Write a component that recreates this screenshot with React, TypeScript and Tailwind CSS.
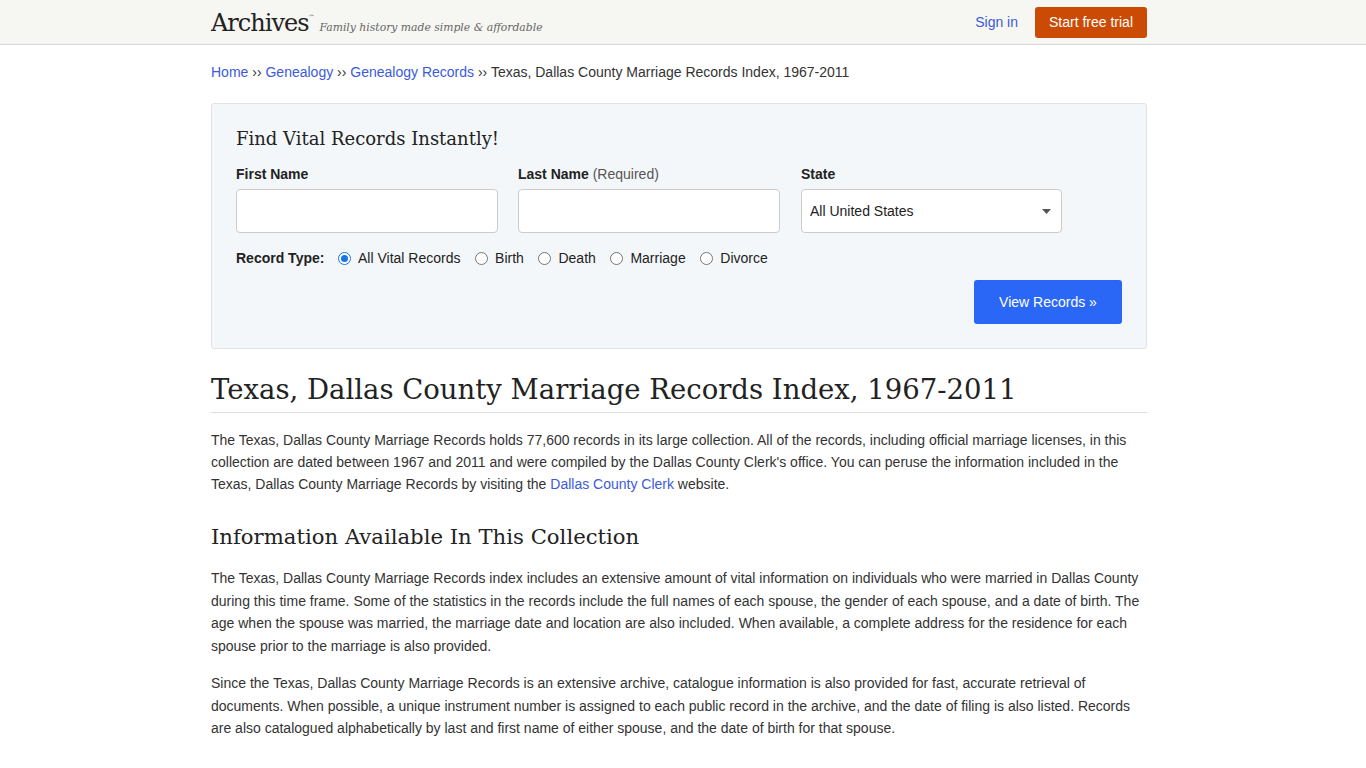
const serif = "font-['DejaVu_Serif',Georgia,serif]";

function Radio({ label, checked }: { label: string; checked?: boolean }) {
  return (
    <label className="flex items-center gap-[7px]">
      <span
        className={
          checked
            ? "w-[13px] h-[13px] rounded-full border border-[#1a73e8] bg-white flex items-center justify-center"
            : "w-[13px] h-[13px] rounded-full border border-[#767676] bg-white"
        }
      >
        {checked && <span className="w-[7px] h-[7px] rounded-full bg-[#1a73e8]" />}
      </span>
      <span>{label}</span>
    </label>
  );
}

export default function App() {
  return (
    <div className="min-h-screen bg-white text-[#333] font-['Liberation_Sans',Arial,sans-serif] text-[14px]">
      {/* HEADER */}
      <header className="bg-[#f6f6f2] border-b border-[#d8d8d8] h-[45px]">
        <div className="w-[944px] mx-auto pr-[8px] h-full flex items-center justify-between">
          <div className="flex items-baseline gap-[6px] pt-[2px]">
            <span className={`${serif} text-[24px] text-[#222] tracking-[-1px]`}>
              Archives<sup className="text-[6px] align-super">™</sup>
            </span>
            <span className={`${serif} italic text-[10.8px] text-[#666]`}>
              Family history made simple &amp; affordable
            </span>
          </div>
          <div className="flex items-center gap-[17px]">
            <a className="text-[#3b5bdb] text-[14px]">Sign in</a>
            <button className="bg-[#cc4b04] text-white text-[14px] rounded-[3px] w-[112px] h-[31px]">
              Start free trial
            </button>
          </div>
        </div>
      </header>

      <main className="w-[944px] mx-auto pr-[8px]">
        {/* BREADCRUMB */}
        <nav className="pt-[17px] text-[14px] leading-[20px]">
          <a className="text-[#3b5bdb]">Home</a> ›› <a className="text-[#3b5bdb]">Genealogy</a> ››{" "}
          <a className="text-[#3b5bdb]">Genealogy Records</a> ›› Texas, Dallas County Marriage Records Index,
          1967-2011
        </nav>

        {/* SEARCH */}
        <div className="mt-[21px] bg-[#f4f7fa] border border-[#dde3e9] rounded-[3px] px-[24px] pt-[22px] pb-[24px]">
          <h3 className={`${serif} text-[18px] text-[#222] leading-[26px]`}>Find Vital Records Instantly!</h3>
          <div className="grid grid-cols-[262px_262px_262px] gap-x-[20px] mt-[12px]">
            <div>
              <div className="font-bold text-[#222] leading-[20px]">First Name</div>
              <input className="mt-[5px] w-full h-[44px] bg-white border border-[#ccc] rounded-[4px]" />
            </div>
            <div>
              <div className="leading-[20px] text-[#222]">
                <b>Last Name</b> <span className="text-[#555]">(Required)</span>
              </div>
              <input className="mt-[5px] w-full h-[44px] bg-white border border-[#ccc] rounded-[4px]" />
            </div>
            <div className="pl-[1px]">
              <div className="font-bold text-[#222] leading-[20px]">State</div>
              <div className="mt-[5px] w-full h-[44px] bg-white border border-[#ccc] rounded-[4px] flex items-center justify-between pl-[8px] pr-[10px] text-[#222]">
                <span>All United States</span>
                <svg width="9" height="5" viewBox="0 0 9 5">
                  <path d="M0 0h9L4.5 5z" fill="#555" />
                </svg>
              </div>
            </div>
          </div>
          <div className="flex items-center gap-[14.6px] mt-[15px] leading-[20px] text-[#222]">
            <span className="font-bold mr-[-1px]">Record Type:</span>
            <Radio label="All Vital Records" checked />
            <Radio label="Birth" />
            <Radio label="Death" />
            <Radio label="Marriage" />
            <Radio label="Divorce" />
          </div>
          <div className="flex justify-end mt-[12px]">
            <button className="bg-[#2b67f6] text-white text-[14px] rounded-[3px] w-[148px] h-[44px]">
              View Records »
            </button>
          </div>
        </div>

        {/* ARTICLE */}
        <h1 className={`${serif} text-[27.5px] text-[#222] leading-[40px] mt-[20px] pb-[3px] border-b border-[#ddd]`}>
          Texas, Dallas County Marriage Records Index, 1967-2011
        </h1>
        <p className="mt-[16px] leading-[22px]">
          The Texas, Dallas County Marriage Records holds 77,600 records in its large collection. All of the records,
          including official marriage licenses, in this collection are dated between 1967 and 2011 and were compiled
          by the Dallas County Clerk's office. You can peruse the information included in the Texas, Dallas County
          Marriage Records by visiting the <a className="text-[#3b5bdb]">Dallas County Clerk</a> website.
        </p>
        <h2 className={`${serif} text-[21.2px] text-[#222] leading-[30px] mt-[27px]`}>
          Information Available In This Collection
        </h2>
        <p className="mt-[15px] leading-[22.5px]">
          The Texas, Dallas County Marriage Records index includes an extensive amount of vital information on
          individuals who were married in Dallas County during this time frame. Some of the statistics in the records
          include the full names of each spouse, the gender of each spouse, and a date of birth. The age when the
          spouse was married, the marriage date and location are also included. When available, a complete address
          for the residence for each spouse prior to the marriage is also provided.
        </p>
        <p className="mt-[15px] leading-[22.5px]">
          Since the Texas, Dallas County Marriage Records is an extensive archive, catalogue information is also
          provided for fast, accurate retrieval of documents. When possible, a unique instrument number is assigned to
          each public record in the archive, and the date of filing is also listed. Records are also catalogued
          alphabetically by last and first name of either spouse, and the date of birth for that spouse.
        </p>
      </main>
    </div>
  );
}
